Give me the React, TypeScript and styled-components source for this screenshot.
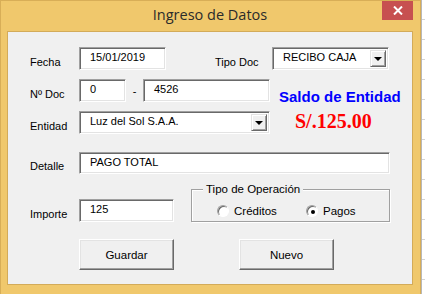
import styled, { createGlobalStyle } from "styled-components";

const GlobalStyle = createGlobalStyle`
  html, body {
    margin: 0;
    padding: 0;
    width: 425px;
    height: 294px;
    overflow: hidden;
    background: #ffffff;
  }
  #root {
    width: 425px;
    height: 294px;
  }
`;

const Desktop = styled.div`
  display: flex;
  width: 425px;
  height: 294px;
`;

const Window = styled.div`
  box-sizing: border-box;
  width: 421px;
  height: 294px;
  flex-shrink: 0;
  display: flex;
  flex-direction: column;
  padding: 0 7px 8px 6px;
  background: #f0c86c;
  border: 1px solid #d8ae57;
  border-bottom: none;
`;

const TitleBar = styled.div`
  height: 30px;
  display: grid;
  grid-template-columns: 1fr auto 1fr;
  align-items: start;
`;

const Title = styled.div`
  grid-column: 2;
  padding-top: 4px;
  font-family: "Open Sans", "Noto Sans", sans-serif;
  font-size: 14.5px;
  line-height: 20px;
  color: #2b2b2b;
`;

const CloseButton = styled.div`
  grid-column: 3;
  justify-self: end;
  width: 31px;
  height: 19px;
  background: #c75050;
  display: flex;
  align-items: center;
  justify-content: center;
`;

const Client = styled.div`
  box-sizing: border-box;
  width: 406px;
  height: 254px;
  background: #f0f0f0;
  border: 1px solid #d3ab59;
  padding: 15px 0 0 22px;
  display: flex;
  flex-direction: column;
  font-family: "Liberation Sans", Arial, sans-serif;
  font-size: 11px;
  color: #000;
`;

const Row = styled.div<{ $top?: number; $height?: number }>`
  display: flex;
  align-items: flex-start;
  margin-top: ${(p) => p.$top ?? 0}px;
  height: ${(p) => p.$height ?? 23}px;
`;

const Label = styled.div<{ $width?: number; $left?: number; $top?: number }>`
  width: ${(p) => p.$width ?? 49}px;
  margin-left: ${(p) => p.$left ?? 0}px;
  margin-top: ${(p) => p.$top ?? 8}px;
  line-height: 14px;
  white-space: nowrap;
`;

const TextBox = styled.div<{ $width: number; $height?: number; $top?: number }>`
  box-sizing: border-box;
  width: ${(p) => p.$width}px;
  height: ${(p) => p.$height ?? 23}px;
  margin-top: ${(p) => p.$top ?? 0}px;
  background: #ffffff;
  border: 1px solid;
  border-color: #a0a0a0 #ffffff #ffffff #a0a0a0;
  box-shadow: inset 1px 1px 0 #696969, inset -1px -1px 0 #e3e3e3;
  padding: 2px 0 0 10px;
  line-height: 14px;
  white-space: nowrap;
  overflow: hidden;
`;

const Combo = styled(TextBox)`
  display: flex;
  justify-content: space-between;
  padding: 2px 2px 2px 10px;
`;

const DropButton = styled.div`
  box-sizing: border-box;
  width: 16px;
  height: 17px;
  background: #f0f0f0;
  border: 1px solid;
  border-color: #e3e3e3 #696969 #696969 #e3e3e3;
  box-shadow: inset 1px 1px 0 #ffffff, inset -1px -1px 0 #a0a0a0;
  display: flex;
  align-items: center;
  justify-content: center;
  &::after {
    content: "";
    border-left: 4px solid transparent;
    border-right: 4px solid transparent;
    border-top: 4px solid #000;
    margin-top: 1px;
  }
`;

const Dash = styled.div`
  width: 17px;
  text-align: center;
  margin-top: 5px;
  line-height: 14px;
`;

const Split = styled.div`
  display: flex;
  margin-top: 9px;
`;

const LeftCol = styled.div`
  display: flex;
  flex-direction: column;
`;

const RightCol = styled.div`
  display: flex;
  flex-direction: column;
  padding-top: 9px;
`;

const Saldo = styled.div`
  padding-left: 9px;
  font-family: "Liberation Sans", Arial, sans-serif;
  font-weight: bold;
  font-size: 15px;
  line-height: 18px;
  color: #0000ff;
  white-space: nowrap;
`;

const Amount = styled.div`
  margin-top: 3px;
  padding-left: 25px;
  font-family: "Liberation Serif", "Times New Roman", serif;
  font-weight: bold;
  font-size: 20px;
  line-height: 24px;
  color: #ff0000;
`;

const Frame = styled.div`
  position: relative;
  box-sizing: border-box;
  width: 199px;
  height: 33px;
  margin-left: 17px;
  border: 1px solid #a0a0a0;
  box-shadow: inset 1px 1px 0 #ffffff, 1px 1px 0 #ffffff;
  padding-top: 14px;
`;

const Legend = styled.div`
  position: absolute;
  top: -8px;
  left: 11px;
  padding: 0 3px;
  background: #f0f0f0;
  line-height: 14px;
  font-size: 11.5px;
`;

const RadioGroup = styled.div`
  display: grid;
  grid-template-columns: 89px auto;
  padding-left: 25px;
`;

const RadioItem = styled.div`
  display: flex;
  align-items: center;
  gap: 5px;
  line-height: 14px;
  font-size: 11.5px;
`;

const RadioCircle = styled.span<{ $checked?: boolean }>`
  box-sizing: border-box;
  width: 12px;
  height: 12px;
  border-radius: 50%;
  background: #ffffff;
  border: 1px solid;
  border-color: #a0a0a0 #ffffff #ffffff #a0a0a0;
  box-shadow: inset 1px 1px 0 #696969;
  display: flex;
  align-items: center;
  justify-content: center;
  &::after {
    content: "";
    display: ${(p) => (p.$checked ? "block" : "none")};
    width: 4px;
    height: 4px;
    border-radius: 50%;
    background: #000;
    margin: 1px 0 0 1px;
  }
`;

const Button = styled.div<{ $left: number }>`
  box-sizing: border-box;
  width: 95px;
  height: 31px;
  margin-left: ${(p) => p.$left}px;
  background: #f0f0f0;
  border: 1px solid;
  border-color: #ffffff #696969 #696969 #ffffff;
  box-shadow: inset -1px -1px 0 #a0a0a0, inset 1px 1px 0 #e3e3e3;
  display: flex;
  align-items: center;
  justify-content: center;
  font-size: 11.5px;
`;

const SheetEdge = styled.div`
  flex: 1;
  height: 294px;
  border-left: 1px solid #b8b8b8;
  background: repeating-linear-gradient(
    to bottom,
    #ffffff 0px,
    #ffffff 19px,
    #d4d4d4 19px,
    #d4d4d4 20px
  );
`;

function App() {
  return (
    <>
      <GlobalStyle />
      <Desktop>
        <Window>
          <TitleBar>
            <Title>Ingreso de Datos</Title>
            <CloseButton>
              <svg width="10" height="9" viewBox="0 0 10 9">
                <path
                  d="M1 0.5 L9 8.5 M9 0.5 L1 8.5"
                  stroke="#ffffff"
                  strokeWidth="2"
                />
              </svg>
            </CloseButton>
          </TitleBar>
          <Client>
            <Row>
              <Label>Fecha</Label>
              <TextBox $width={87}>15/01/2019</TextBox>
              <Label $width={57} $left={49}>
                Tipo Doc
              </Label>
              <Combo $width={117}>
                <span>RECIBO CAJA</span>
                <DropButton />
              </Combo>
            </Row>
            <Split>
              <LeftCol>
                <Row>
                  <Label>Nº Doc</Label>
                  <TextBox $width={47}>0</TextBox>
                  <Dash>-</Dash>
                  <TextBox $width={127}>4526</TextBox>
                </Row>
                <Row $top={9}>
                  <Label>Entidad</Label>
                  <Combo $width={191}>
                    <span>Luz del Sol S.A.A.</span>
                    <DropButton />
                  </Combo>
                </Row>
              </LeftCol>
              <RightCol>
                <Saldo>Saldo de Entidad</Saldo>
                <Amount>S/.125.00</Amount>
              </RightCol>
            </Split>
            <Row $top={18} $height={22}>
              <Label $top={7}>Detalle</Label>
              <TextBox $width={311} $height={22}>
                PAGO TOTAL
              </TextBox>
            </Row>
            <Row $top={15} $height={33}>
              <Label $top={18}>Importe</Label>
              <TextBox $width={95} $top={10}>
                125
              </TextBox>
              <Frame>
                <Legend>Tipo de Operación</Legend>
                <RadioGroup>
                  <RadioItem>
                    <RadioCircle />
                    Créditos
                  </RadioItem>
                  <RadioItem>
                    <RadioCircle $checked />
                    Pagos
                  </RadioItem>
                </RadioGroup>
              </Frame>
            </Row>
            <Row $top={17} $height={31}>
              <Button $left={49}>Guardar</Button>
              <Button $left={65}>Nuevo</Button>
            </Row>
          </Client>
        </Window>
        <SheetEdge />
      </Desktop>
    </>
  );
}

export default App;
